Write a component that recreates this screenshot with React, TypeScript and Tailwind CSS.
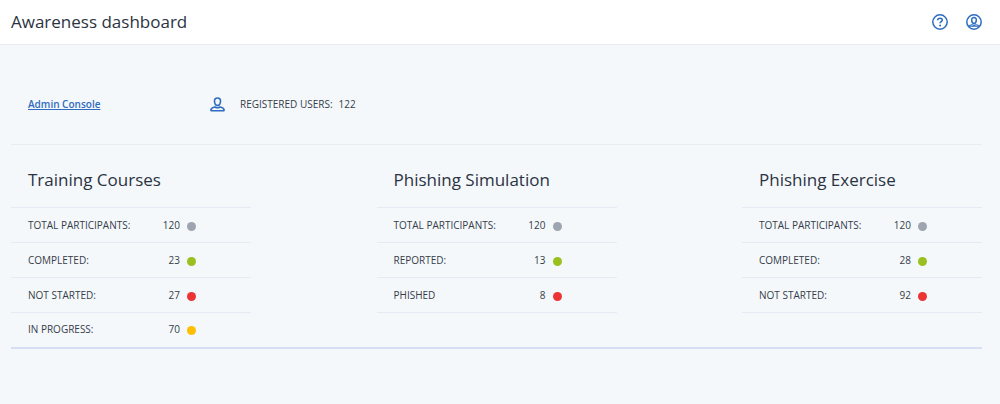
type Stat = { label: string; value: number; dot: string };

type Panel = { title: string; stats: Stat[] };

const GRAY = "bg-[#9fa5b0]";
const GREEN = "bg-[#99c01f]";
const RED = "bg-[#ec3434]";
const YELLOW = "bg-[#fdbf00]";

const panels: Panel[] = [
  {
    title: "Training Courses",
    stats: [
      { label: "TOTAL PARTICIPANTS:", value: 120, dot: GRAY },
      { label: "COMPLETED:", value: 23, dot: GREEN },
      { label: "NOT STARTED:", value: 27, dot: RED },
      { label: "IN PROGRESS:", value: 70, dot: YELLOW },
    ],
  },
  {
    title: "Phishing Simulation",
    stats: [
      { label: "TOTAL PARTICIPANTS:", value: 120, dot: GRAY },
      { label: "REPORTED:", value: 13, dot: GREEN },
      { label: "PHISHED", value: 8, dot: RED },
    ],
  },
  {
    title: "Phishing Exercise",
    stats: [
      { label: "TOTAL PARTICIPANTS:", value: 120, dot: GRAY },
      { label: "COMPLETED:", value: 28, dot: GREEN },
      { label: "NOT STARTED:", value: 92, dot: RED },
    ],
  },
];

function HelpIcon() {
  return (
    <svg viewBox="0 0 16 16" className="h-4 w-4" fill="none" stroke="currentColor" aria-hidden="true">
      <circle cx="8" cy="8" r="7.2" strokeWidth="1.5" />
      <path d="M5.700 6.200C5.800 4.900 6.700 4.300 8 4.300c1.400 0 2.300.7 2.300 1.800 0 1.600-2.200 1.600-2.200 3.200" strokeWidth="1.6" />
      <circle cx="8.100" cy="11.400" r="1" fill="currentColor" stroke="none" />
    </svg>
  );
}

function AccountIcon() {
  return (
    <svg viewBox="0 0 16 16" className="h-4 w-4" fill="none" stroke="currentColor" aria-hidden="true">
      <circle cx="8" cy="8" r="7.2" strokeWidth="1.5" />
      <path d="M8 3.600c1.600 0 2.400 1 2.300 2.500C10.200 7.900 9.300 9.500 8 9.500S5.800 7.900 5.700 6.100C5.600 4.600 6.400 3.600 8 3.600z" strokeWidth="1.5" />
      <path d="M2.800 12.300c.7-1.200 2-1.600 3.200-1.600.6.500 1.200.6 2 .6s1.400-.1 2-.6c1.200 0 2.500.4 3.200 1.600z" strokeWidth="1.1" />
    </svg>
  );
}

function UserIcon() {
  return (
    <svg viewBox="0 0 15 15" className="h-[15px] w-[15px] text-[#2f6cc0]" fill="none" stroke="currentColor" strokeWidth="1.6" strokeLinejoin="round" aria-hidden="true">
      <path d="M7.500 1c2.100 0 3.100 1.300 3 3.200-.1 2.300-1.200 4.200-3 4.200s-2.900-1.900-3-4.200C4.400 2.300 5.400 1 7.500 1z" />
      <path d="M5 10c1.600 1 3.400 1 5 0 2.300.3 3.800 1 4.100 2.800.1.600-.2.900-.7.900H1.600c-.5 0-.8-.3-.7-.9C1.200 11 2.700 10.300 5 10z" />
    </svg>
  );
}

function StatPanel({ panel }: { panel: Panel }) {
  return (
    <section className="w-60">
      <h2 className="px-[17px] text-[17px] leading-6 text-[#2b3342]">{panel.title}</h2>
      <table className="mt-[15px] w-full border-t border-[#e5ebf4] text-[10px] text-[#363d48]">
        <tbody>
          {panel.stats.map((stat) => (
            <tr
              key={stat.label}
              className="h-[35px] border-b border-[#e5ebf4] nth-4:h-[34px] nth-4:border-b-0"
            >
              <th scope="row" className="pl-[17px] text-left font-normal">
                {stat.label}
              </th>
              <td className="text-right">{stat.value}</td>
              <td className="w-[71px] pt-[2px] pl-[7px]">
                <span className={`block h-[9px] w-[9px] rounded-full ${stat.dot}`} />
              </td>
            </tr>
          ))}
        </tbody>
      </table>
    </section>
  );
}

export default function App() {
  return (
    <div className="min-h-screen bg-[#f4f8fb] font-['Open_Sans',sans-serif]">
      <header className="flex h-[45px] items-center justify-between border-b border-[#e8ecf0] bg-white pr-[18px] pl-[11px]">
        <h1 className="text-[17px] leading-6 text-[#2b3342]">Awareness dashboard</h1>
        <div className="flex gap-[18px] text-[#2f6cc0]">
          <button type="button" aria-label="Help">
            <HelpIcon />
          </button>
          <button type="button" aria-label="Account">
            <AccountIcon />
          </button>
        </div>
      </header>

      <main className="pr-[18px] pl-[11px]">
        <div className="flex items-center border-b border-[#e8edf3] px-[17px] pt-[52px] pb-8 text-[10px]">
          <a href="#" className="w-[182px] font-semibold text-[#2f6cc0] underline">
            Admin Console
          </a>
          <UserIcon />
          <p className="ml-[15px] flex gap-[6px] text-[#363d48]">
            <span>REGISTERED USERS:</span>
            <span>122</span>
          </p>
        </div>

        <div className="flex items-start justify-between border-b-2 border-[#d6e0f2] pt-[23px]">
          {panels.map((panel) => (
            <StatPanel key={panel.title} panel={panel} />
          ))}
        </div>
      </main>
    </div>
  );
}
